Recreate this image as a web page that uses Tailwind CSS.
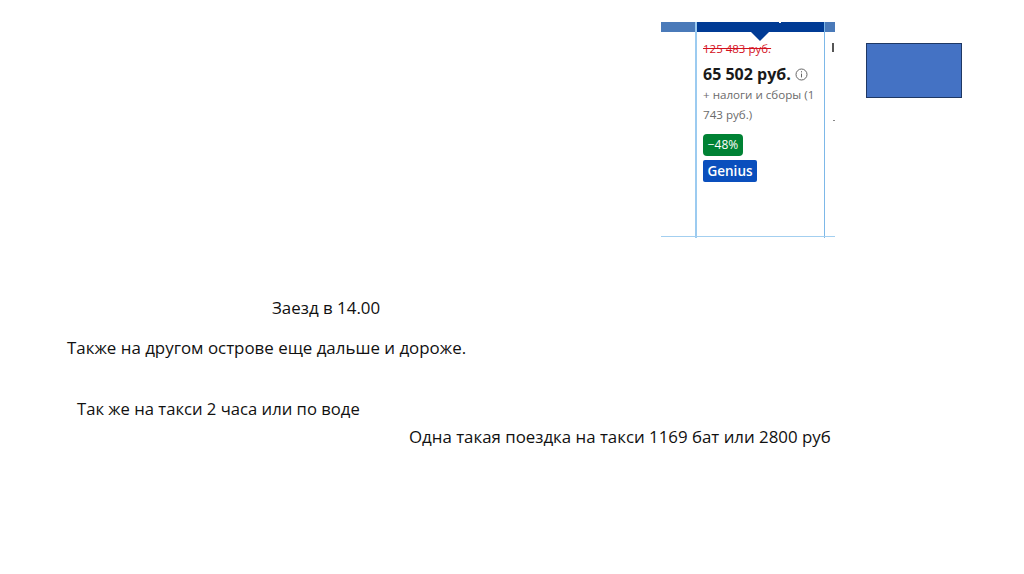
<!DOCTYPE html>
<html lang="ru">
<head>
    <meta charset="UTF-8">
    <title>Слайд</title>
    <script src="https://cdn.jsdelivr.net/npm/@tailwindcss/browser@4"></script>
</head>
<body class="bg-white">
<div class="relative w-[1024px] h-[574px] overflow-hidden bg-white font-['Open_Sans',sans-serif] text-[#111]">

    <!-- вырезка с booking -->
    <div class="absolute left-[661px] top-[22px] w-[174px] h-[216px] overflow-hidden">
        <div class="flex h-[10px]">
            <div class="w-[35px] bg-[#4a7ab9]"></div>
            <div class="w-[129px] bg-[#003b95] relative">
                <div class="absolute left-[83px] top-[-1px] w-[2px] h-[2px] bg-white"></div>
            </div>
            <div class="w-[10px] bg-[#4a7ab9]"></div>
        </div>
        <svg class="absolute left-[90px] top-[10px]" width="18" height="9" viewBox="0 0 18 9"><path d="M0 0h18L9 9z" fill="#003b95"/></svg>
        <div class="absolute left-[34px] top-0 w-[2px] h-[216px] bg-[#9ccbf0]"></div>
        <div class="absolute left-[163px] top-0 w-[1px] h-[216px] bg-[#7db8e8]"></div>
        <div class="absolute left-0 top-[214px] w-[174px] h-[1px] bg-[#a3cff0]"></div>
        <div class="absolute left-[171px] top-[21px] w-[2px] h-[9px] bg-[#555]"></div>
        <div class="absolute left-[172px] top-[98px] w-[2px] h-[1px] bg-[#888]"></div>

        <div class="flex flex-col items-start pl-[42px] pt-[10px] w-[170px]">
            <div class="text-[11.5px] leading-[14px] text-[#d4111e] line-through whitespace-nowrap">125 483 руб.</div>
            <div class="flex items-center gap-[4px] mt-[8px] h-[20px]">
                <span class="text-[16px] font-bold text-[#1a1a1a] whitespace-nowrap">65 502 руб.</span>
                <svg width="13" height="13" viewBox="0 0 13 13" fill="none" stroke="#666"><circle cx="6.5" cy="6.5" r="5.5"/><path d="M6.5 5.6v3.8M6.5 3.2v1.2"/></svg>
            </div>
            <div class="text-[11.6px] leading-[20px] text-[#6b6b6b] w-[120px] mt-[1px]">+ налоги и сборы (1 743 руб.)</div>
            <div class="mt-[9px] w-[40px] h-[22px] rounded-[4px] bg-[#008234] text-white text-[12px] flex items-center justify-center">−48%</div>
            <div class="mt-[4px] w-[54px] h-[22px] rounded-[2px] bg-[#0a4fbd] text-white text-[13.5px] font-semibold flex items-center justify-center">Genius</div>
        </div>
    </div>

    <!-- синий прямоугольник -->
    <div class="absolute left-[866px] top-[43px] w-[96px] h-[55px] bg-[#4472c4] border border-[#1f3864]"></div>

    <div class="absolute left-[272px] top-[297px] text-[16.9px] leading-[22px] whitespace-nowrap">Заезд в 14.00</div>
    <div class="absolute left-[67px] top-[337px] text-[16.9px] leading-[22px] whitespace-nowrap">Также на другом острове еще дальше и дороже.</div>
    <div class="absolute left-[77px] top-[398px] text-[16.65px] leading-[22px] whitespace-nowrap">Так же на такси 2 часа или по воде</div>
    <div class="absolute left-[409px] top-[426px] text-[16.85px] leading-[22px] whitespace-nowrap">Одна такая поездка на такси 1169 бат или 2800 руб</div>
</div>
</body>
</html>
